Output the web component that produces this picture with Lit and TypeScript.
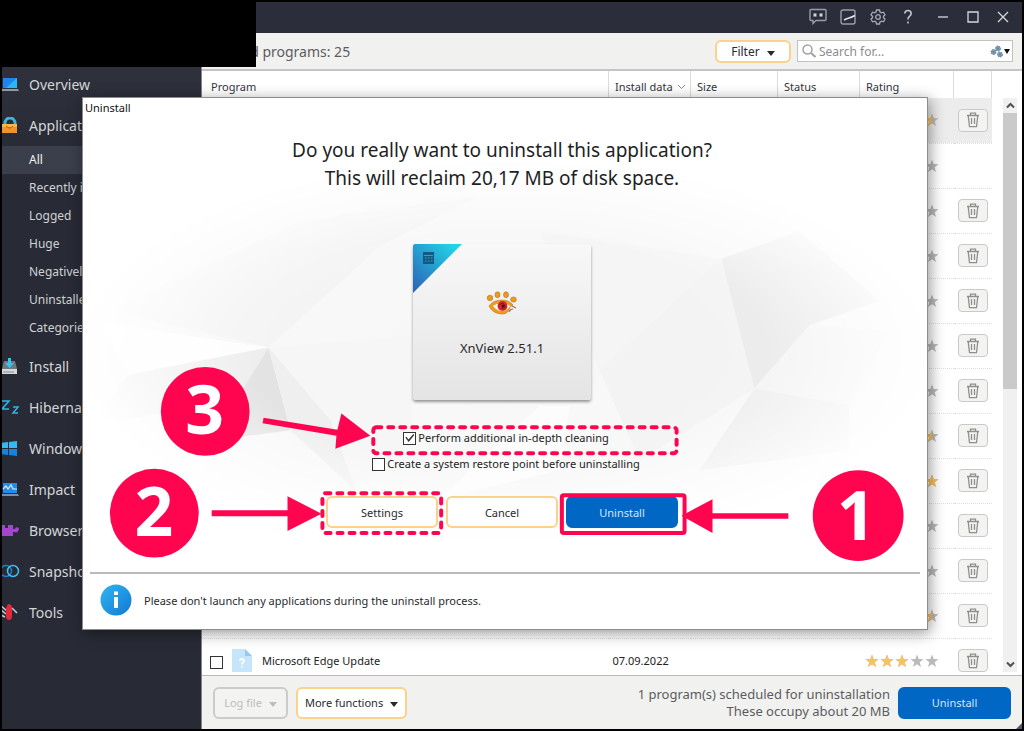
import { LitElement, html, svg, css, nothing } from "lit";
import { customElement, property, state } from "lit/decorators.js";
import { classMap } from "lit/directives/class-map.js";

const icons = {
  overview: svg`<path d="M2 2h14v10H2z" fill="#1c86ee"/><path d="M16 2v10H5z" fill="#28b8f4"/><path d="M0 13h17l1 2H0z" fill="#8d9aa8"/>`,
  applications: svg`<path d="M4 8V6a5 5 0 0 1 10 0v2" fill="none" stroke="#3fb2dc" stroke-width="3"/><path d="M1 7h15v9H1z" fill="#f0932b"/><path d="M1 7h15v3H1z" fill="#f7b54a"/><path d="M5 9q4 4 7 0" fill="none" stroke="#b05d10" stroke-width="1"/>`,
  install: svg`<path d="M3 3h11l2 8H1z" fill="#6d7880"/><path d="M1 11h15v5H1z" fill="#d5d9dc"/><path d="M2 14h11" stroke="#8a9094"/><path d="M7 0h3v5h3l-4.500 5L4 5h3z" fill="#35c5ea"/>`,
  hibernation: svg`<path d="M1 2h7L1 10h7M12 8h5l-5 6h5" fill="none" stroke="#2bb6e8" stroke-width="1.500"/>`,
  windows: svg`<path d="M0 3l7-1v6H0zM8 2l8-1v7H8z" fill="#35b8f2"/><path d="M0 9h7v6l-7-1zM8 9h8v7l-8-1z" fill="#1583dc"/>`,
  impact: svg`<path d="M2 2h14v10H2z" fill="#1f8df0"/><path d="M2 8l3-3 2 3 3-4 2 4h4" fill="none" stroke="#d6f1ff" stroke-width="1.200"/><path d="M0 13h17l1 2H0z" fill="#7590a8"/>`,
  browser: svg`<path d="M0 3h4v3h3V3h5v4h2a2 2 0 1 1 3 2 2 2 0 0 1-3 1h-2v4H0z" fill="#a643cf"/>`,
  snapshots: svg`<circle cx="5" cy="8" r="5.500" fill="none" stroke="#1c7fd0" stroke-width="1.500"/><circle cx="12" cy="8" r="5.500" fill="none" stroke="#3fc0f0" stroke-width="1.500"/>`,
  tools: svg`<path d="M0 2l6 5M0 6l5 4M11 4l5 5M0 11l4 2" stroke="#c4cad0" stroke-width="1.600"/><path d="M7 0q4 0 4 4v8q0 4-3 4t-3-4V4z" fill="#e3293a"/>`,
};

const NAV = [
  { id: "overview", label: "Overview", sub: [] as string[] },
  {
    id: "applications",
    label: "Applications",
    sub: ["All", "Recently installed", "Logged", "Huge", "Negatively", "Uninstalled", "Categories"],
  },
  { id: "install", label: "Install", sub: [] },
  { id: "hibernation", label: "Hibernation", sub: [] },
  { id: "windows", label: "Windows", sub: [] },
  { id: "impact", label: "Impact", sub: [] },
  { id: "browser", label: "Browser", sub: [] },
  { id: "snapshots", label: "Snapshots", sub: [] },
  { id: "tools", label: "Tools", sub: [] },
];

interface Program {
  name?: string;
  date?: string;
  rating: number;
  locked?: boolean;
  selected?: boolean;
}

const PROGRAMS: Program[] = [
  { rating: 4.5, selected: true },
  { rating: 3, locked: true },
  { rating: 3 },
  { rating: 3 },
  { rating: 3 },
  { rating: 3 },
  { rating: 3 },
  { rating: 4.5 },
  { rating: 5 },
  { rating: 3 },
  { rating: 3 },
  { rating: 4.5 },
  { name: "Microsoft Edge Update", date: "07.09.2022", rating: 3 },
];

@customElement("side-nav")
class SideNav extends LitElement {
  static styles = css`
    :host {
      display: block;
      background: linear-gradient(#31343f, #282b36 120px);
      border-right: 1px solid #85868a;
      padding-top: 31px;
      overflow: hidden;
      white-space: nowrap;
    }
    ul {
      list-style: none;
      margin: 0;
      padding: 0;
    }
    .sub {
      margin-bottom: 4px;
    }
    a {
      display: flex;
      align-items: center;
      gap: 9px;
      height: 41px;
      color: #d4d5d8;
      font-size: 14px;
      text-decoration: none;
    }
    .sub a {
      box-sizing: border-box;
      height: 28px;
      padding: 0 0 2px 27px;
      font-size: 12px;
      color: #d0d1d5;
    }
    .sub a.current {
      background: #3b3e4b;
      color: #f2f2f4;
    }
    svg {
      flex: none;
    }
  `;
  render() {
    return html`<nav>
      <ul>
        ${NAV.map(
          (n) => html`<li>
            <a href="#${n.id}"
              ><svg width="18" height="17" viewBox="1 0 18 17" aria-hidden="true">${(icons as any)[n.id]}</svg>${n.label}</a
            >
            ${n.sub.length
              ? html`<ul class="sub">
                  ${n.sub.map((s, i) => html`<li><a href="#${n.id}" class=${classMap({ current: i === 0 })}>${s}</a></li>`)}
                </ul>`
              : nothing}
          </li>`
        )}
      </ul>
    </nav>`;
  }
}

const STAR = "M7 0.500l1.700 4.600 4.800.2-3.800 3 1.300 4.700L7 10.300 3 13l1.300-4.700-3.800-3 4.800-.2z";

@customElement("star-rating")
class StarRating extends LitElement {
  @property({ type: Number }) value = 0;
  static styles = css`
    :host {
      display: flex;
      gap: 1px;
    }
  `;
  render() {
    return [0, 1, 2, 3, 4].map((i) => {
      const part = Math.max(0, Math.min(1, this.value - i));
      return html`<svg width="14" height="14" viewBox="0 0 14 14" aria-hidden="true">
        <path d=${STAR} fill="#bababa" />
        ${part > 0
          ? svg`<path d=${STAR} fill="#fbc15c" style="clip-path: inset(0 ${(1 - part) * 100}% 0 0)" />`
          : nothing}
      </svg>`;
    });
  }
}

@customElement("program-table")
class ProgramTable extends LitElement {
  static styles = css`
    :host {
      display: flex;
      min-height: 0;
      overflow: hidden;
      background: #fff;
      padding-bottom: 3px;
    }
    .view {
      flex: 1;
      overflow: hidden;
    }
    table {
      width: 100%;
      table-layout: fixed;
      border-collapse: collapse;
      font-size: 11px;
      color: #222;
    }
    th {
      box-sizing: border-box;
      height: 27px;
      padding: 4px 0 0 6px;
      text-align: left;
      font-weight: 400;
      color: #33343c;
      border-right: 1px solid #dcdcdc;
      background: #fff;
      white-space: nowrap;
    }
    th:first-child {
      padding-left: 9px;
    }
    th svg {
      margin-left: 2px;
    }
    .install { width: 82px; }
    .size { width: 87px; }
    .status { width: 82px; }
    .rating { width: 94px; }
    .remove { width: 38px; }
    td {
      box-sizing: border-box;
      height: 45px;
      padding: 0 4px;
      border-bottom: 1px dotted #dedede;
      vertical-align: middle;
    }
    .selected td {
      background: #ececec;
    }
    .program {
      display: flex;
      align-items: center;
      padding-left: 4px;
    }
    .program input {
      appearance: none;
      width: 13px;
      height: 13px;
      margin: 4px 9px 0 0;
      border: 1px solid #333;
      background: #fff;
    }
    .program label {
      padding-left: 10px;
    }
    star-rating {
      padding-left: 1px;
    }
    .trash {
      display: grid;
      place-items: center;
      width: 30px;
      height: 23px;
      margin: 0;
      padding: 0;
      border: 1px solid #c9c9c9;
      border-radius: 4px;
      background: #f3f3f2;
    }
    .scroll {
      display: flex;
      flex-direction: column;
      align-items: center;
      width: 14px;
      margin: 27px 5px 0 11px;
      background: #f0f0f0;
    }
    .thumb {
      flex: 276 0 0;
      width: 100%;
      background: #cacaca;
    }
    .track {
      flex: 268 0 0;
    }
    .scroll svg {
      flex: none;
      padding: 4px 0;
    }
  `;
  render() {
    return html`<div class="view">
        <table>
          <thead>
            <tr>
              <th>Program</th>
              <th class="install">
                Install data
                <svg width="9" height="7" viewBox="0 0 9 7" aria-hidden="true"><path d="M1 1l3.500 3.500L8 1" fill="none" stroke="#8a8a8a" /></svg>
              </th>
              <th class="size">Size</th>
              <th class="status">Status</th>
              <th class="rating">Rating</th>
              <th class="remove"></th>
            </tr>
          </thead>
          <tbody>
            ${PROGRAMS.map(
              (p) => html`<tr class=${classMap({ selected: !!p.selected })}>
                <td>
                  ${p.name
                    ? html`<div class="program">
                        <input id="program" type="checkbox" />
                        <svg width="20" height="24" viewBox="0 0 20 24" aria-hidden="true">
                          <path d="M0 0h13l7 7v17H0z" fill="#c5e5fa" />
                          <path d="M13 0v7h7z" fill="#96c9ea" />
                          <path d="M8 12q0-2 2-2t2 2q0 1-2 2.500v1M10 17v1.500" fill="none" stroke="#fff" stroke-width="1.800" />
                        </svg>
                        <label for="program">${p.name}</label>
                      </div>`
                    : nothing}
                </td>
                <td>${p.date ?? nothing}</td>
                <td></td>
                <td></td>
                <td><star-rating .value=${p.rating}></star-rating></td>
                <td>
                  ${p.locked
                    ? nothing
                    : html`<button class="trash" aria-label="Remove">
                        <svg width="14" height="16" viewBox="0 0 14 16" fill="none" stroke="#8f8f8f" stroke-width="1.300" aria-hidden="true">
                          <path d="M1 3.500h12M4.500 3.500V1.200h5v2.300M2.200 3.500l1.300 11.200h7L11.800 3.500M5.500 6v6M8.500 6v6" />
                        </svg>
                      </button>`}
                </td>
              </tr>`
            )}
          </tbody>
        </table>
      </div>
      <div class="scroll">
        <svg width="9" height="7" viewBox="0 0 9 7" aria-hidden="true"><path d="M1 5.500L4.500 2 8 5.500" fill="none" stroke="#505050" stroke-width="2" /></svg>
        <div class="thumb"></div>
        <div class="track"></div>
        <svg width="9" height="7" viewBox="0 0 9 7" aria-hidden="true"><path d="M1 1.500L4.500 5 8 1.500" fill="none" stroke="#505050" stroke-width="2" /></svg>
      </div>`;
  }
}

const buttonStyles = css`
  .btn {
    box-sizing: border-box;
    height: 32px;
    margin: 0;
    padding: 0 6px;
    border: 2px solid #fad28a;
    border-radius: 6px;
    background: #fff;
    color: #2a2a2e;
    font: 11px var(--ui);
    white-space: nowrap;
  }
  .btn.primary {
    background: #0067c5;
    border-color: #0067c5;
    color: #d3e6f8;
  }
  .btn:disabled {
    background: #f3f3f2;
    border-color: #cbcbcb;
    color: #bdbdbd;
  }
  .btn svg {
    margin-left: 4px;
  }
`;

const caret = html`<svg width="8" height="5" viewBox="0 0 8 5" aria-hidden="true"><path d="M0 0h8L4 5z" fill="currentColor" /></svg>`;

@customElement("uninstall-dialog")
class UninstallDialog extends LitElement {
  @state() private deep = true;
  static styles = [
    buttonStyles,
    css`
      :host {
        display: flex;
        flex-direction: column;
        box-sizing: border-box;
        background: #fff;
        border: 1px solid #8c8c8c;
        box-shadow: 2px 3px 14px rgba(0, 0, 0, 0.42);
        color: #2a2a2e;
      }
      .art,
      .callouts {
        position: absolute;
        inset: 0;
        width: 100%;
        height: 100%;
        pointer-events: none;
      }
      .title {
        position: relative;
        margin: 0;
        padding: 2px 2px 4px;
        font-size: 11px;
        line-height: 16px;
        font-weight: 400;
        color: #111;
      }
      .body {
        position: relative;
        flex: 1;
        display: flex;
        flex-direction: column;
        align-items: center;
        padding: 16px 6px 0 0;
      }
      h1 {
        margin: 0 0 52px;
        font: 400 19px/28px var(--ui);
        color: #1e1f26;
        text-align: center;
      }
      .card {
        position: relative;
        box-sizing: border-box;
        width: 178px;
        height: 156px;
        padding-top: 47px;
        border-radius: 3px;
        background: linear-gradient(#f8f8f8, #e4e4e4);
        box-shadow: 0 2px 3px rgba(0, 0, 0, 0.4);
        text-align: center;
        font: 13px/20px var(--ui);
      }
      .card p {
        margin: 23px 0 0;
      }
      .card svg {
        display: block;
        margin: 0 auto;
      }
      .card .corner {
        position: absolute;
        left: 0;
        top: 0;
      }
      .options {
        display: grid;
        justify-items: center;
        gap: 10px;
        margin: 30px 0 24px;
        padding-left: 8px;
      }
      .options label {
        display: flex;
        align-items: center;
        gap: 2px;
        font-size: 11px;
        line-height: 16px;
        color: #222;
      }
      .options input {
        appearance: none;
        display: grid;
        place-items: center;
        width: 13px;
        height: 13px;
        margin: 0;
        border: 1px solid #333;
        background: #fff;
      }
      .options input:checked::before {
        content: "";
        width: 9px;
        height: 8px;
        background: #333;
        clip-path: polygon(0 45%, 12% 35%, 36% 68%, 90% 0, 100% 12%, 38% 100%);
      }
      .actions {
        display: flex;
        gap: 8px;
      }
      .actions .btn {
        width: 112px;
      }
      .note {
        position: relative;
        display: flex;
        align-items: center;
        gap: 12px;
        box-sizing: border-box;
        height: 57px;
        margin: 0 7px;
        padding: 0 10px 4px;
        border-top: 2px solid #b9b9b9;
        font-size: 11px;
      }
      .note p {
        margin: 2px 0 0;
      }
      .num {
        font: 700 68px "Open Sans", "Noto Sans", sans-serif;
        fill: #fff;
        text-anchor: middle;
      }
    `,
  ];
  render() {
    return html`
      <svg class="art" viewBox="82 97 846 532" aria-hidden="true">
        <defs>
          <radialGradient id="fade">
            <stop offset="0" stop-color="#fff" />
            <stop offset="0.600" stop-color="#ddd" />
            <stop offset="1" stop-color="#000" />
          </radialGradient>
          <mask id="m"><ellipse cx="505" cy="350" rx="435" ry="195" fill="url(#fade)" /></mask>
        </defs>
        <g mask="url(#m)">
          <path d="M82 150h846v400H82z" fill="#f7f7f7" />
          <path d="M110 310L268 347 380 245 480 195 300 220z" fill="#f3f3f3" />
          <path d="M100 322L268 347 128 374z" fill="#fdfdfd" />
          <path d="M128 374L268 347 235 400 90 425z" fill="#ececec" />
          <path d="M268 347L210 440 290 430z" fill="#dfdfdf" />
          <path d="M268 347L412 335V440L355 490z" fill="#f5f5f5" />
          <path d="M268 347L290 430 355 490 330 420z" fill="#ededed" />
          <path d="M540 230L722 258 600 370z" fill="#f4f4f4" />
          <path d="M722 258L600 370 640 460 755 388z" fill="#f2f2f2" />
          <path d="M722 258L755 388 810 325 880 300 800 230z" fill="#e9e9e9" />
          <path d="M755 388L850 405 890 330 810 325z" fill="#f3f3f3" />
          <path d="M755 388L700 470 850 450 850 405z" fill="#ededed" />
          <path d="M540 405L440 498 560 470 570 405z" fill="#fcfcfc" />
        </g>
      </svg>
      <p class="title">Uninstall</p>
      <div class="body">
        <h1>Do you really want to uninstall this application?<br />This will reclaim 20,17 MB of disk space.</h1>
        <div class="card">
          <svg class="corner" width="49" height="49" viewBox="0 0 49 49" aria-hidden="true">
            <defs>
              <linearGradient id="c" x1="1" y1="0" x2="0" y2="1"><stop offset="0.100" stop-color="#22d3e6" /><stop offset="0.950" stop-color="#2c65b8" /></linearGradient>
            </defs>
            <path d="M2 0h47L0 49V2q0-2 2-2z" fill="url(#c)" />
            <path d="M10 8h11v12H10z" fill="#145a80" />
            <path d="M11 11.500h9M12 14h1.500M15 14h1.500M18 14h1.500M12 17h1.500M15 17h1.500M18 17h1.500" stroke="#2aa5c8" stroke-width="1.200" />
          </svg>
          <svg width="32" height="24" viewBox="0 0 32 24" aria-hidden="true">
            <g fill="#f09a1c" stroke="#9a6a20" stroke-width="0.500">
              <ellipse cx="4" cy="7" rx="2.800" ry="2.800" />
              <ellipse cx="11.500" cy="3.800" rx="2.500" ry="3" />
              <ellipse cx="20" cy="3.800" rx="2.500" ry="3" />
              <ellipse cx="27.500" cy="8.500" rx="2.800" ry="2.600" />
              <path d="M3 15q4-6 13-6 7 0 11 5l-3 2q-2 8-9 7Q6 22 3 15z" />
            </g>
            <path d="M7 15q4-3 9-3 5 0 8 3-3 5-8 5t-9-5z" fill="#fff" />
            <circle cx="16.500" cy="15" r="5" fill="#d7262b" />
            <path d="M13.500 14q3-4 5 0t-3 3" fill="none" stroke="#6e1620" />
            <circle cx="17" cy="15" r="1.500" fill="#481018" />
            <path d="M23 21q1-3 4-3M26 15l4 2" fill="none" stroke="#9a7060" stroke-width="1.200" />
          </svg>
          <p>XnView 2.51.1</p>
        </div>
        <div class="options">
          <label
            ><input type="checkbox" .checked=${this.deep} @change=${(e: any) => (this.deep = e.target.checked)} />Perform additional in-depth
            cleaning</label
          >
          <label><input type="checkbox" />Create a system restore point before uninstalling</label>
        </div>
        <div class="actions">
          <button class="btn">Settings</button>
          <button class="btn">Cancel</button>
          <button class="btn primary">Uninstall</button>
        </div>
      </div>
      <div class="note">
        <svg width="32" height="32" viewBox="0 0 32 32" aria-hidden="true">
          <defs><linearGradient id="i" x1="0" y1="0" x2="1" y2="1"><stop offset="0" stop-color="#31b5ee" /><stop offset="1" stop-color="#1179d6" /></linearGradient></defs>
          <circle cx="16" cy="16" r="15.500" fill="url(#i)" />
          <path d="M14 13h4v11h-4zM14 7.500h4v3.500h-4z" fill="#fff" />
        </svg>
        <p>Please don't launch any applications during the uninstall process.</p>
      </div>
      <svg class="callouts" viewBox="82 97 846 532">
        <g fill="#ff0550">
          <circle cx="204.500" cy="411" r="44.500" />
          <circle cx="153.500" cy="513" r="44.500" />
          <circle cx="859" cy="515.500" r="45.500" />
          <path d="M263 417.500L337 429.500 341 413 370 435.500 335 448.500 336 435.500 262 423z" />
          <path d="M211 510h76v-14l34 17.500L287 531v-15h-76z" />
          <path d="M789 513h-76v-14l-31 16.500 31 17.500v-14.500h76z" />
        </g>
        <g fill="none" stroke="#ff0550" stroke-width="4">
          <g stroke-linecap="round" stroke-dasharray="5 7">
            <rect x="373" y="427" width="304" height="26" rx="3" />
            <rect x="322" y="493" width="119" height="40" rx="3" />
          </g>
          <rect x="562" y="495" width="123" height="38" rx="2" />
        </g>
        <text class="num" x="204" y="434">3</text>
        <text class="num" x="153" y="536">2</text>
        <text class="num" x="857" y="540">1</text>
      </svg>
    `;
  }
}

@customElement("app-root")
class AppRoot extends LitElement {
  static styles = [
    buttonStyles,
    css`
      :host {
        --ui: "Noto Sans", "Open Sans", sans-serif;
        position: relative;
        display: grid;
        grid-template: 31px minmax(0, 1fr) / 200px minmax(0, 1fr);
        box-sizing: border-box;
        height: 100vh;
        border: 2px solid #000;
        font-family: var(--ui);
        background: #f1f1f0;
      }
      .titlebar {
        grid-column: 1 / -1;
        display: flex;
        justify-content: flex-end;
        align-items: center;
        gap: 10px;
        padding: 0 9px 2px 0;
        background: #2b2e3a;
      }
      .titlebar button {
        display: grid;
        place-items: center;
        width: 20px;
        height: 20px;
        margin: 0;
        padding: 0;
        border: 0;
        background: none;
      }
      .titlebar .help {
        margin-right: 5px;
      }
      .main {
        display: flex;
        flex-direction: column;
        min-width: 0;
        min-height: 0;
      }
      .toolbar {
        display: flex;
        align-items: center;
        gap: 6px;
        height: 36px;
        padding-right: 9px;
        border-bottom: 2px solid #c4c4c4;
      }
      h2 {
        flex: 1;
        margin: 0;
        font-size: 14px;
        font-weight: 400;
        color: #5c5c60;
      }
      .toolbar .btn {
        width: 76px;
        height: 23px;
        font-size: 12px;
      }
      .search {
        box-sizing: border-box;
        display: flex;
        align-items: center;
        gap: 3px;
        width: 216px;
        height: 22px;
        padding: 0 2px 0 4px;
        border: 1px solid #c2c2c2;
        background: #fff;
      }
      .search input {
        flex: 1;
        min-width: 0;
        padding: 0;
        border: 0;
        outline: 0;
        background: none;
        font: 12px var(--ui);
      }
      .search input::placeholder {
        color: #8c8c8c;
      }
      program-table {
        flex: 1;
      }
      .footer {
        display: flex;
        align-items: center;
        gap: 8px;
        box-sizing: border-box;
        height: 54px;
        padding: 0 11px;
        border-top: 1px solid #b8b8b8;
      }
      .log {
        width: 75px;
      }
      .more {
        width: 111px;
      }
      .footer .primary {
        width: 113px;
      }
      .summary {
        flex: 1;
        margin: 0;
        text-align: right;
        font-size: 13px;
        line-height: 17px;
        color: #5c5c60;
      }
      .redacted {
        position: absolute;
        left: -2px;
        top: -2px;
        width: 256px;
        height: 67px;
        background: #000;
      }
      uninstall-dialog {
        position: absolute;
        inset: 95px 94px 99px 80px;
      }
      .grip {
        position: absolute;
        right: 0;
        bottom: 0;
      }
    `,
  ];
  render() {
    return html`
      <header class="titlebar">
        <button aria-label="Feedback">
          <svg width="18" height="17" viewBox="0 0 18 17" fill="none" stroke="#9a9caa" stroke-width="1.400">
            <path d="M2 1.500h14q1 0 1 1v9q0 1-1 1H7L4 15.500v-3H2q-1 0-1-1v-9q0-1 1-1z" />
            <path d="M6 5v4M4.300 6l3.400 2M7.700 6L4.300 8M12 5v4M10.300 6l3.400 2M13.700 6l-3.400 2" stroke="#e4e4ea" stroke-width="1" />
          </svg>
        </button>
        <button aria-label="Theme">
          <svg width="16" height="16" viewBox="0 0 16 16" fill="none" stroke="#9a9caa" stroke-width="1.400">
            <rect x="1" y="1" width="14" height="14" rx="2" /><path d="M4 11Q7 9.500 9 9t6-2.500" stroke="#e4e4ea" />
          </svg>
        </button>
        <button aria-label="Settings">
          <svg width="16" height="16" viewBox="0 0 16 16" fill="none" stroke="#a6a8b5" stroke-width="1.300">
            <path d="M6.500 1h3l.5 2 1.500.8 2-.6 1.500 2.600-1.500 1.500v1.400l1.500 1.500-1.500 2.600-2-.6-1.500.8-.5 2h-3L6 13l-1.500-.8-2 .6L1 10.200l1.500-1.500V7.300L1 5.800l1.500-2.600 2 .6L6 3z" />
            <circle cx="8" cy="8" r="2.300" />
          </svg>
        </button>
        <button class="help" aria-label="Help">
          <svg width="10" height="16" viewBox="0 0 10 16" fill="none" stroke="#c4c5cd" stroke-width="1.600">
            <path d="M1.800 4.500Q2 1.500 5 1.500T8.200 4.500Q8.200 6 6.500 7.300T5 10.500M5 12.500v2" />
          </svg>
        </button>
        <button aria-label="Minimize">
          <svg width="10" height="10" viewBox="0 0 10 10" stroke="#d8d8dc" stroke-width="1.300"><path d="M0 5h10" /></svg>
        </button>
        <button aria-label="Maximize">
          <svg width="12" height="12" viewBox="0 0 12 12" fill="none" stroke="#d8d8dc" stroke-width="1.300"><path d="M1 1h10v10H1z" /></svg>
        </button>
        <button aria-label="Close">
          <svg width="12" height="12" viewBox="0 0 12 12" stroke="#d8d8dc" stroke-width="1.300"><path d="M1 1l10 10M11 1L1 11" /></svg>
        </button>
      </header>
      <side-nav></side-nav>
      <main class="main">
        <div class="toolbar">
          <h2>Installed programs: 25</h2>
          <button class="btn">Filter ${caret}</button>
          <label class="search">
            <svg width="14" height="14" viewBox="0 0 14 14" fill="none" stroke="#a3a3a3" stroke-width="1.500" aria-hidden="true">
              <circle cx="5.500" cy="5.500" r="4.500" /><path d="M9 9l4.500 4" stroke-width="2" />
            </svg>
            <input type="search" placeholder="Search for..." aria-label="Search" />
            <svg width="20" height="13" viewBox="0 0 20 13" aria-hidden="true">
              <g fill="#8b9db0" stroke="#63788c" stroke-dasharray="1.500 1">
                <circle cx="3.500" cy="7" r="2.500" /><circle cx="8" cy="3.500" r="2.500" /><circle cx="10" cy="9.500" r="2.500" />
              </g>
              <g fill="#2c8fd0"><circle cx="3.500" cy="7" r="1" /><circle cx="8" cy="3.500" r="1" /><circle cx="10" cy="9.500" r="1" /></g>
              <path d="M14 4h6l-3 5z" fill="#111" />
            </svg>
          </label>
        </div>
        <program-table></program-table>
        <footer class="footer">
          <button class="btn log" disabled>Log file ${caret}</button>
          <button class="btn more">More functions ${caret}</button>
          <p class="summary">1 program(s) scheduled for uninstallation<br />These occupy about 20 MB</p>
          <button class="btn primary">Uninstall</button>
        </footer>
      </main>
      <div class="redacted"></div>
      <uninstall-dialog role="dialog" aria-label="Uninstall"></uninstall-dialog>
      <svg class="grip" width="6" height="6" viewBox="0 0 6 6" aria-hidden="true"><path d="M6 0v6H0z" fill="#555a66" /></svg>
    `;
  }
}
